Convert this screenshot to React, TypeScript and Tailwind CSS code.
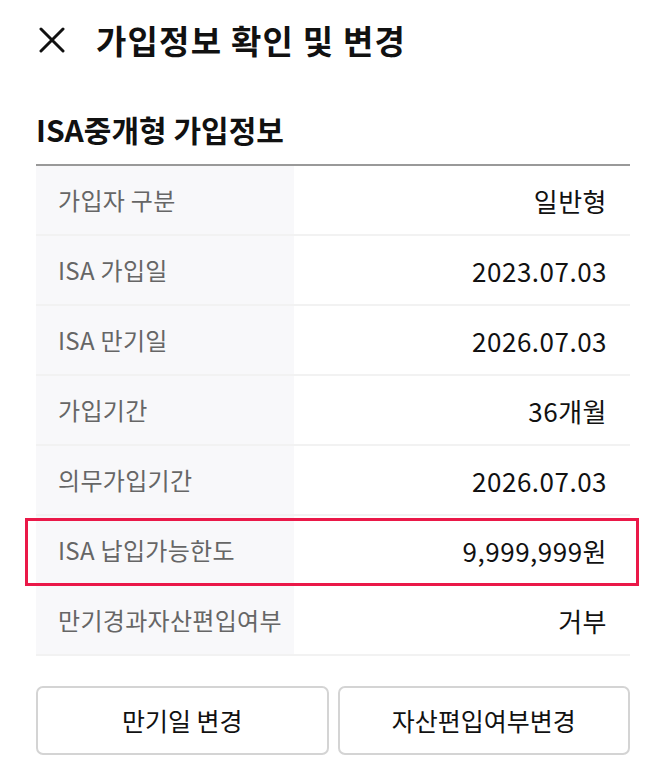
import React from "react";

const rows = [
  { label: "가입자 구분", value: "일반형" },
  { label: "ISA 가입일", value: "2023.07.03" },
  { label: "ISA 만기일", value: "2026.07.03" },
  { label: "가입기간", value: "36개월" },
  { label: "의무가입기간", value: "2026.07.03" },
  { label: "ISA 납입가능한도", value: "9,999,999원", highlight: true },
  { label: "만기경과자산편입여부", value: "거부" },
];

export default function App() {
  return (
    <div
      className="w-[666px] h-[780px] bg-white text-[#111]"
      style={{ fontFamily: '"Noto Sans CJK KR", "Noto Sans", sans-serif' }}
    >
      {/* Header */}
      <div className="flex items-center h-[80px] pl-[39px]">
        <svg width="26" height="26" viewBox="0 0 26 26" className="shrink-0">
          <path d="M2 2 L24 24 M24 2 L2 24" stroke="#111" strokeWidth="3" strokeLinecap="round" />
        </svg>
        <h1 className="ml-[31px] text-[33px] font-bold tracking-[1.2px] leading-none">
          가입정보 확인 및 변경
        </h1>
      </div>

      <div className="px-[36px]">
        <div className="h-[84px] flex items-end pb-[20px]">
          <h2 className="text-[30px] font-bold leading-none tracking-[0px]">
            ISA중개형 가입정보
          </h2>
        </div>

        {/* Table */}
        <div className="relative border-t-2 border-[#999]">
          {rows.map((r) => (
            <div key={r.label} className="flex h-[70px] border-b-2 border-[#f2f2f2]">
              <div className="w-[258px] bg-[#f8f8fa] flex items-center pl-[22px] text-[24px] text-[#666] tracking-[0.3px] whitespace-nowrap">
                {r.label}
              </div>
              <div className="flex-1 flex items-center justify-end pr-[23px] text-[26px] text-[#111] tracking-[0.5px]">
                {r.value}
              </div>
            </div>
          ))}
          {/* highlight overlay */}
          <div className="absolute left-[-11px] right-[-9px] top-[352px] h-[68px] border-[3px] border-[#ea1848] pointer-events-none" />
        </div>

        {/* Buttons */}
        <div className="flex gap-[9px] mt-[30px]">
          <button className="flex-1 h-[69px] rounded-[7px] border-2 border-[#d4d4d4] bg-white text-[25px] text-[#111] tracking-[0px]">
            만기일 변경
          </button>
          <button className="flex-1 h-[69px] rounded-[7px] border-2 border-[#d4d4d4] bg-white text-[25px] text-[#111] tracking-[0px]">
            자산편입여부변경
          </button>
        </div>
      </div>
    </div>
  );
}
